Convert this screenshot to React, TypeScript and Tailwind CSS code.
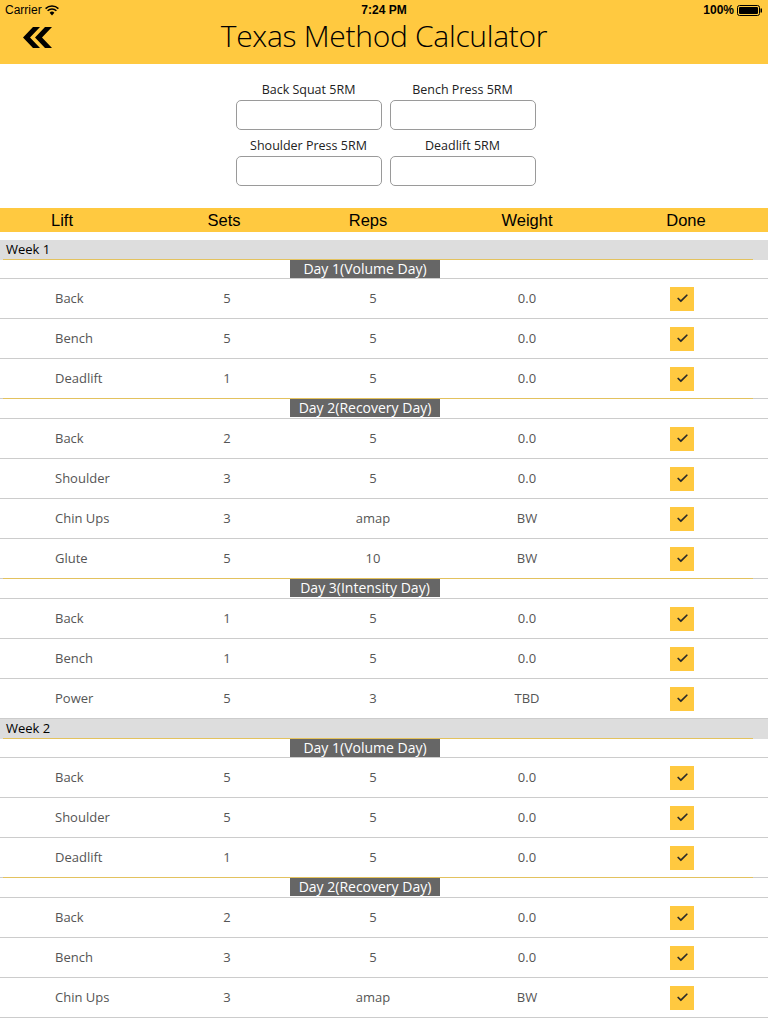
import { Check } from "lucide-react";

type Lift = {
  name: string;
  sets: string;
  reps: string;
  weight: string;
};

type Day = {
  title: string;
  lifts: Lift[];
};

type Week = {
  label: string;
  days: Day[];
};

const weeks: Week[] = [
  {
    label: "Week 1",
    days: [
      {
        title: "Day 1(Volume Day)",
        lifts: [
          { name: "Back", sets: "5", reps: "5", weight: "0.0" },
          { name: "Bench", sets: "5", reps: "5", weight: "0.0" },
          { name: "Deadlift", sets: "1", reps: "5", weight: "0.0" },
        ],
      },
      {
        title: "Day 2(Recovery Day)",
        lifts: [
          { name: "Back", sets: "2", reps: "5", weight: "0.0" },
          { name: "Shoulder", sets: "3", reps: "5", weight: "0.0" },
          { name: "Chin Ups", sets: "3", reps: "amap", weight: "BW" },
          { name: "Glute", sets: "5", reps: "10", weight: "BW" },
        ],
      },
      {
        title: "Day 3(Intensity Day)",
        lifts: [
          { name: "Back", sets: "1", reps: "5", weight: "0.0" },
          { name: "Bench", sets: "1", reps: "5", weight: "0.0" },
          { name: "Power", sets: "5", reps: "3", weight: "TBD" },
        ],
      },
    ],
  },
  {
    label: "Week 2",
    days: [
      {
        title: "Day 1(Volume Day)",
        lifts: [
          { name: "Back", sets: "5", reps: "5", weight: "0.0" },
          { name: "Shoulder", sets: "5", reps: "5", weight: "0.0" },
          { name: "Deadlift", sets: "1", reps: "5", weight: "0.0" },
        ],
      },
      {
        title: "Day 2(Recovery Day)",
        lifts: [
          { name: "Back", sets: "2", reps: "5", weight: "0.0" },
          { name: "Bench", sets: "3", reps: "5", weight: "0.0" },
          { name: "Chin Ups", sets: "3", reps: "amap", weight: "BW" },
        ],
      },
    ],
  },
];

const thin = { fontFamily: '"Open Sans", sans-serif' };

function StatusBar() {
  return (
    <div className="relative h-5 flex items-center justify-between px-[5px] text-[12px] text-black" style={{ fontFamily: '"Liberation Sans", sans-serif' }}>
      <div className="flex items-center gap-[3px]">
        <span>Carrier</span>
        <svg width="14" height="11" viewBox="0 0 14 11">
          <path d="M7 10.5 L4.6 7.8 A3.4 3.4 0 0 1 9.4 7.8 Z" fill="black" />
          <path d="M2.6 5.8 A6.2 6.2 0 0 1 11.4 5.8" stroke="black" strokeWidth="1.5" fill="none" />
          <path d="M0.6 3.6 A9.2 9.2 0 0 1 13.4 3.6" stroke="black" strokeWidth="1.5" fill="none" />
        </svg>
      </div>
      <span className="absolute left-1/2 -translate-x-1/2 font-semibold">7:24 PM</span>
      <div className="flex items-center gap-[3px]">
        <span className="font-semibold">100%</span>
        <svg width="26" height="11" viewBox="0 0 26 11">
          <rect x="0.5" y="0.5" width="22" height="10" rx="2" fill="none" stroke="black" />
          <rect x="2" y="2" width="19" height="7" rx="1" fill="black" />
          <rect x="23.5" y="3.5" width="1.5" height="4" fill="black" />
        </svg>
      </div>
    </div>
  );
}

function NavBar() {
  return (
    <div className="relative h-11 flex items-start justify-center pt-px">
      <svg className="absolute left-[22px] top-[7px]" width="31" height="21" viewBox="0 0 31 21">
        <polygon points="11,0 18,0 8,10.5 18,21 11,21 1,10.5" fill="black" />
        <polygon points="23,0 30,0 20,10.5 30,21 23,21 13,10.5" fill="black" />
      </svg>
      <h1 className="text-[30px] leading-[30px] font-light text-black tracking-[-0.3px]" style={{ fontFamily: '"Open Sans", sans-serif' }}>
        Texas Method Calculator
      </h1>
    </div>
  );
}

function Field({ label }: { label: string }) {
  return (
    <div className="flex flex-col items-center w-[146px]">
      <span className="text-[12.5px] text-[#222] leading-[19px]" style={thin}>{label}</span>
      <div className="mt-[1px] w-full h-[30px] rounded-[5px] border border-[#9a9a9a] bg-white" />
    </div>
  );
}

function LiftRow({ lift }: { lift: Lift }) {
  return (
    <div className="h-10 border-b border-[#cccccc] flex items-center text-[13px] text-[#555]" style={thin}>
      <span className="w-[180px] pl-[55px]">{lift.name}</span>
      <span className="w-[94px] text-center">{lift.sets}</span>
      <span className="w-[198px] text-center">{lift.reps}</span>
      <span className="w-[110px] text-center">{lift.weight}</span>
      <div className="w-[172px] ml-[14px] flex justify-center">
        <div className="w-6 h-6 bg-[#ffc940] flex items-center justify-center">
          <Check size={13} strokeWidth={3.2} className="text-[#2a2a2a]" />
        </div>
      </div>
    </div>
  );
}

// the first day of a week sits right under the week bar, later ones under a row
function DayHeader({ title, first }: { title: string; first: boolean }) {
  return (
    <div className={`relative -mt-px border-b border-[#cccccc] flex ${first ? "h-5" : "h-[21px]"}`}>
      <div className="absolute left-[3px] right-[15px] top-0 h-px bg-[#e3c25e]" />
      <div className="mt-px ml-[290px] w-[150px] h-[18px] bg-[#666666] text-white text-[14px] leading-[18px] text-center" style={thin}>
        {title}
      </div>
    </div>
  );
}

export default function App() {
  return (
    <div className="w-[768px] h-[1024px] overflow-hidden bg-white">
      <div className="bg-[#ffc940]">
        <StatusBar />
        <NavBar />
      </div>

      <div className="pt-[16px] flex flex-col items-center gap-[6px] pl-[3px]">
        <div className="flex gap-2">
          <Field label="Back Squat 5RM" />
          <Field label="Bench Press 5RM" />
        </div>
        <div className="flex gap-2">
          <Field label="Shoulder Press 5RM" />
          <Field label="Deadlift 5RM" />
        </div>
      </div>

      <div className="mt-[22px] h-6 bg-[#ffc940] flex items-center text-[16.5px] text-black" style={{ fontFamily: '"Liberation Sans", sans-serif' }}>
        <span className="w-[124px] text-center">Lift</span>
        <span className="w-[200px] text-center">Sets</span>
        <span className="w-[88px] text-center">Reps</span>
        <span className="w-[230px] text-center">Weight</span>
        <span className="w-[88px] text-center">Done</span>
      </div>

      <div className="mt-2">
        {weeks.map((week) => (
          <div key={week.label}>
            <div className="h-5 bg-[#dddddd] pl-[6px] text-[13px] leading-[19px] text-black" style={thin}>
              {week.label}
            </div>
            {week.days.map((day, i) => (
              <div key={i}>
                <DayHeader title={day.title} first={i === 0} />
                {day.lifts.map((lift, j) => (
                  <LiftRow key={j} lift={lift} />
                ))}
              </div>
            ))}
          </div>
        ))}
      </div>
    </div>
  );
}
